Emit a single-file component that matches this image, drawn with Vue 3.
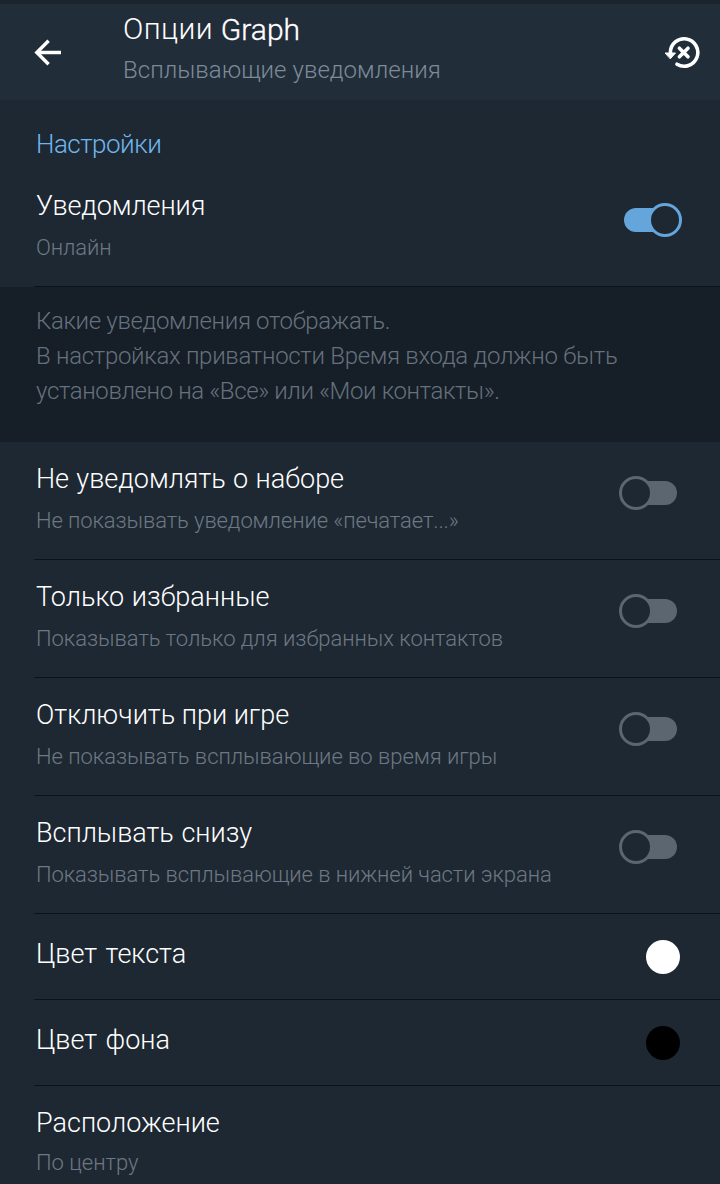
<template>
  <div class="screen">
    <header class="toolbar">
      <svg class="back" viewBox="0 0 32 32" width="32" height="32">
        <path d="M29 16.5H5M16.6 4.8 4.8 16.5l11.8 11.7" />
      </svg>
      <div class="heading">
        <h1>Опции <span class="latin">Graph</span></h1>
        <p>Всплывающие уведомления</p>
      </div>
      <svg class="reset" viewBox="0 0 40 40" width="40" height="40">
        <path
          class="ring"
          d="M10.4 22.5V19.5A13.7 13.7 0 1 1 17 31.2"
        />
        <path class="head" d="M5.5 20h10l-5 5.6z" />
        <path class="cross" d="M19.4 15.2l8.6 8.6M28 15.2l-8.6 8.6" />
      </svg>
    </header>

    <section class="first">
      <h2>Настройки</h2>
      <div class="row main">
        <div class="texts">
          <div class="title t-main">Уведомления</div>
          <div class="summary s-main">Онлайн</div>
        </div>
        <span class="switch on"><i class="track"></i><i class="thumb"></i></span>
      </div>
    </section>

    <div class="hint">
      <p v-for="(line, i) in hint" :key="i" :class="'hint-' + i">{{ line }}</p>
    </div>

    <section>
      <div
        v-for="item in toggles"
        :key="item.id"
        class="row toggle"
        @click="item.on = !item.on"
      >
        <div class="texts">
          <div class="title" :class="'t-' + item.id">{{ item.title }}</div>
          <div class="summary" :class="'s-' + item.id">{{ item.summary }}</div>
        </div>
        <span class="switch" :class="{ on: item.on }">
          <i class="track"></i><i class="thumb"></i>
        </span>
      </div>
      <div v-for="item in colors" :key="item.id" class="row color">
        <div class="title" :class="'t-' + item.id">{{ item.title }}</div>
        <span class="dot" :style="{ backgroundColor: item.value }"></span>
      </div>
      <div class="row place">
        <div class="texts">
          <div class="title">Расположение</div>
          <div class="summary">По центру</div>
        </div>
      </div>
    </section>
  </div>
</template>

<script setup>
import { ref } from "vue";

const hint = [
  "Какие уведомления отображать.",
  "В настройках приватности Время входа должно быть",
  "установлено на «Все» или «Мои контакты».",
];

const toggles = ref([
  {
    id: "typing",
    title: "Не уведомлять о наборе",
    summary: "Не показывать уведомление «печатает...»",
    on: false,
  },
  {
    id: "fav",
    title: "Только избранные",
    summary: "Показывать только для избранных контактов",
    on: false,
  },
  {
    id: "game",
    title: "Отключить при игре",
    summary: "Не показывать всплывающие во время игры",
    on: false,
  },
  {
    id: "bottom",
    title: "Всплывать снизу",
    summary: "Показывать всплывающие в нижней части экрана",
    on: false,
  },
]);

const colors = [
  { id: "text", title: "Цвет текста", value: "#ffffff" },
  { id: "back", title: "Цвет фона", value: "#000000" },
];
</script>

<style>
body {
  margin: 0;
  background: #1e2732;
}
</style>

<style scoped>
.screen {
  width: 720px;
  height: 1184px;
  box-sizing: border-box;
  overflow: hidden;
  border-top: 4px solid #1b242d;
  background: #1e2832;
  color: #fff;
  font-family: Roboto, "Noto Sans", sans-serif;
  font-weight: 300;
  white-space: nowrap;
}
h1,
h2,
p {
  margin: 0;
  font-weight: 300;
}
.toolbar {
  display: flex;
  height: 96px;
  background: #222d3a;
}
.back {
  margin: 32px 0 0 32px;
  fill: none;
  stroke: #fff;
  stroke-width: 3.4;
}
.heading {
  flex: 1;
  padding: 7px 0 0 59px;
}
h1 {
  font-size: 30px;
  line-height: 36px;
  letter-spacing: 0.4px;
}
.latin {
  position: relative;
  top: 1px;
  font-size: 30px;
  letter-spacing: 0;
  -webkit-text-stroke: 0.35px #fff;
}
.heading p {
  margin-top: 5px;
  font-size: 24px;
  line-height: 36px;
  letter-spacing: 0.04px;
  color: #7d8b99;
}
.reset {
  margin: 29px 20px 0 0;
  fill: none;
  stroke: #fff;
  stroke-width: 3.6;
  stroke-linecap: round;
}
.head {
  fill: #fff;
  stroke-width: 1;
}
.first {
  height: 187px;
}
h2 {
  padding: 28px 0 0 36px;
  font-size: 26px;
  line-height: 32px;
  letter-spacing: -0.5px;
  color: #6fb6ee;
}
.row {
  position: relative;
  display: flex;
  box-sizing: border-box;
  padding-left: 36px;
}
.row::after {
  content: "";
  position: absolute;
  left: 34px;
  right: 0;
  bottom: 0;
  height: 1px;
  background: #0a121b;
}
.texts {
  flex: 1;
}
.title {
  font-size: 27px;
  line-height: 32px;
}
.t-main {
  letter-spacing: -0.08px;
}
.t-typing {
  word-spacing: 0.7px;
}
.t-fav,
.t-bottom {
  word-spacing: 1px;
}
.t-text,
.t-back {
  word-spacing: 2px;
}
.summary {
  font-size: 22px;
  line-height: 26px;
  margin-top: 13px;
  color: #6d7884;
}
.s-main,
.s-typing {
  letter-spacing: -0.1px;
}
.s-fav,
.s-game {
  letter-spacing: -0.04px;
}
.s-bottom {
  letter-spacing: -0.08px;
}
.main {
  height: 127px;
  padding-top: 30px;
}
.switch {
  position: relative;
  width: 58px;
  height: 34px;
  margin: 13px 43px 0 0;
  color: #5b6671;
}
.main .switch {
  margin: 13px 38px 0 0;
}
.switch.on {
  color: #64a6dc;
}
.track {
  position: absolute;
  top: 5px;
  left: 14px;
  right: 0;
  height: 24px;
  border-radius: 12px;
  background: currentColor;
}
.thumb {
  position: absolute;
  top: 0;
  left: 0;
  width: 34px;
  height: 34px;
  box-sizing: border-box;
  border: 3px solid currentColor;
  border-radius: 50%;
  background: #1e2832;
}
.on .track {
  left: 0;
  right: 14px;
}
.on .thumb {
  left: 24px;
}
.hint {
  height: 155px;
  box-sizing: border-box;
  padding: 17px 0 0 36px;
  background: #161e27;
  font-size: 24px;
  line-height: 35px;
  color: #65717d;
}
.hint-0 {
  letter-spacing: -0.34px;
}
.hint-1 {
  letter-spacing: -0.3px;
}
.hint-2 {
  letter-spacing: -0.38px;
}
.toggle {
  height: 118px;
  padding-top: 21px;
}
.color {
  height: 86px;
  padding-top: 24px;
  justify-content: space-between;
}
.dot {
  width: 34px;
  height: 34px;
  margin: 2px 40px 0 0;
  border-radius: 50%;
}
.place {
  height: 99px;
  padding-top: 21px;
}
.place .summary {
  margin-top: 11px;
}
</style>
